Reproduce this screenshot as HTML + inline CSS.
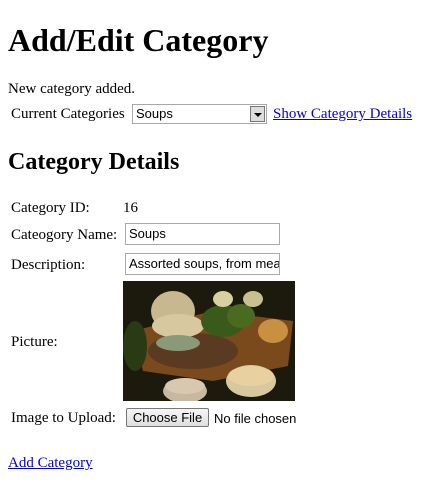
<!DOCTYPE html>
<html><head><style>
body{margin:0;width:427px;height:481px;background:#fff;font-family:"Liberation Serif",serif;font-size:15px;color:#000;position:relative;overflow:hidden}
.a{position:absolute;white-space:nowrap;line-height:18px}
h1,h2{margin:0;position:absolute;font-weight:bold;white-space:nowrap}
a{color:#0000ee;text-decoration:underline}
.box{position:absolute;border:1px solid #a9a9a9;background:#fff;font-family:"Liberation Sans",sans-serif;font-size:13px;line-height:20px;padding-left:3px;box-sizing:border-box;overflow:hidden;white-space:nowrap}
</style></head><body>
<h1 style="left:8px;top:22px;font-size:32px;line-height:37px">Add/Edit Category</h1>
<div class="a" style="left:8px;top:80px">New category added.</div>
<div class="a" style="left:11px;top:105px">Current Categories</div>
<div class="box" style="left:132px;top:104px;width:135px;height:20px;line-height:18px">Soups
<div style="position:absolute;right:1px;top:1px;width:15px;height:16px;background:#ddd;border:1px solid #777;box-sizing:border-box"><div style="position:absolute;left:3px;top:6px;border-left:4px solid transparent;border-right:4px solid transparent;border-top:4px solid #000"></div></div></div>
<div class="a" style="left:273px;top:105px"><a>Show Category Details</a></div>
<h2 style="left:8px;top:148px;font-size:24px;line-height:28px">Category Details</h2>
<div class="a" style="left:11px;top:199px">Category ID:</div>
<div class="a" style="left:123px;top:199px">16</div>
<div class="a" style="left:11px;top:226px">Cateogory Name:</div>
<div class="box" style="left:125px;top:223px;width:155px;height:22px">Soups</div>
<div class="a" style="left:11px;top:256px">Description:</div>
<div class="box" style="left:125px;top:253px;width:155px;height:22px">Assorted soups, from meat</div>
<div class="a" style="left:11px;top:333px">Picture:</div>
<svg style="position:absolute;left:123px;top:281px" width="172" height="120" viewBox="0 0 172 120">
<rect width="172" height="120" fill="#1c1a0c"/>
<path d="M10 50 L90 30 L170 40 L165 85 L90 100 L20 90 Z" fill="#7a4a1c"/>
<ellipse cx="70" cy="70" rx="45" ry="18" fill="#5a3a20"/>
<ellipse cx="50" cy="30" rx="22" ry="20" fill="#c8b890"/>
<ellipse cx="55" cy="45" rx="26" ry="12" fill="#d8c8a0"/>
<ellipse cx="55" cy="62" rx="22" ry="8" fill="#8a9a78"/>
<ellipse cx="100" cy="40" rx="22" ry="16" fill="#3a5a1c"/>
<ellipse cx="118" cy="35" rx="14" ry="12" fill="#4a6a20"/>
<ellipse cx="150" cy="50" rx="15" ry="12" fill="#c89040"/>
<ellipse cx="100" cy="18" rx="10" ry="8" fill="#d8d0a0"/>
<ellipse cx="130" cy="18" rx="10" ry="8" fill="#c8c090"/>
<ellipse cx="128" cy="100" rx="25" ry="16" fill="#d8c8a0"/>
<ellipse cx="128" cy="95" rx="23" ry="10" fill="#e8d0a0"/>
<ellipse cx="62" cy="110" rx="22" ry="12" fill="#c8b8a0"/>
<ellipse cx="62" cy="105" rx="20" ry="8" fill="#d8c8b0"/>
<ellipse cx="12" cy="65" rx="12" ry="25" fill="#2a3a14"/>
</svg>
<div class="a" style="left:11px;top:409px">Image to Upload:</div>
<div style="position:absolute;left:126px;top:408px;width:83px;height:19px;border:1px solid #777;border-radius:2px;background:linear-gradient(#f6f6f6,#dedede);box-sizing:border-box;font-family:'Liberation Sans',sans-serif;font-size:13px;line-height:17px;text-align:center">Choose File</div>
<div class="a" style="left:214px;top:410px;font-family:'Liberation Sans',sans-serif;font-size:13px">No file chosen</div>
<div class="a" style="left:8px;top:454px"><a>Add Category</a></div>
</body></html>
